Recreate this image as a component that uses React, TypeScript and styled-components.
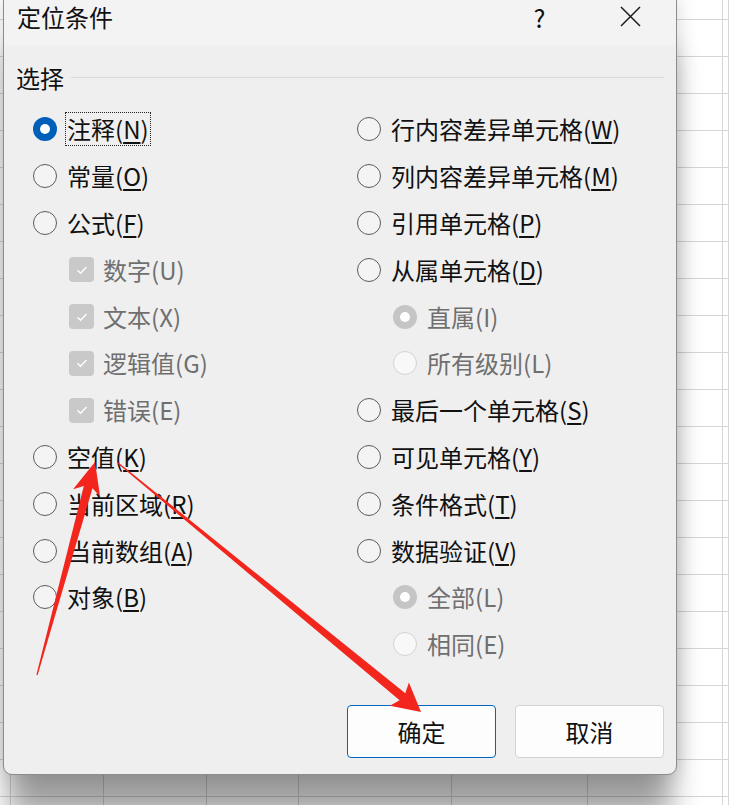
import styled, { createGlobalStyle, css } from 'styled-components';

type Option = {
  label: string;
  hotkey: string;
  kind?: 'radio' | 'check';
  checked?: boolean;
  disabled?: boolean;
  indent?: boolean;
  focused?: boolean;
};

const leftOptions: Option[] = [
  { label: '注释', hotkey: 'N', checked: true, focused: true },
  { label: '常量', hotkey: 'O' },
  { label: '公式', hotkey: 'F' },
  { label: '数字', hotkey: 'U', kind: 'check', checked: true, disabled: true, indent: true },
  { label: '文本', hotkey: 'X', kind: 'check', checked: true, disabled: true, indent: true },
  { label: '逻辑值', hotkey: 'G', kind: 'check', checked: true, disabled: true, indent: true },
  { label: '错误', hotkey: 'E', kind: 'check', checked: true, disabled: true, indent: true },
  { label: '空值', hotkey: 'K' },
  { label: '当前区域', hotkey: 'R' },
  { label: '当前数组', hotkey: 'A' },
  { label: '对象', hotkey: 'B' },
];

const rightOptions: Option[] = [
  { label: '行内容差异单元格', hotkey: 'W' },
  { label: '列内容差异单元格', hotkey: 'M' },
  { label: '引用单元格', hotkey: 'P' },
  { label: '从属单元格', hotkey: 'D' },
  { label: '直属', hotkey: 'I', checked: true, disabled: true, indent: true },
  { label: '所有级别', hotkey: 'L', disabled: true, indent: true },
  { label: '最后一个单元格', hotkey: 'S' },
  { label: '可见单元格', hotkey: 'Y' },
  { label: '条件格式', hotkey: 'T' },
  { label: '数据验证', hotkey: 'V' },
  { label: '全部', hotkey: 'L', checked: true, disabled: true, indent: true },
  { label: '相同', hotkey: 'E', disabled: true, indent: true },
];

const sheetColumns = [11, 93, 103, 92, 153, 136, 135];

const GlobalStyle = createGlobalStyle`
  body {
    margin: 0;
    background: #fff;
    font-family: "Noto Sans CJK SC", "Noto Sans", sans-serif;
  }
`;

const Page = styled.div`
  position: relative;
  width: 729px;
  height: 805px;
  overflow: hidden;
  background: #fff;
`;

const Sheet = styled.div`
  display: grid;
  grid-template-columns: ${sheetColumns.map((w) => `${w}px`).join(' ')} 1fr;
  grid-auto-rows: 37px;
  margin-top: -17px;
`;

const Cell = styled.div`
  border-right: 1px solid #d6d6d6;
  border-bottom: 1px solid #d6d6d6;
`;

const Dialog = styled.div`
  position: absolute;
  left: 3px;
  top: -1px;
  width: 674px;
  height: 776px;
  box-sizing: border-box;
  display: flex;
  flex-direction: column;
  background: #efefef;
  border: 1px solid #8c8c8c;
  border-radius: 0 0 9px 9px;
  box-shadow: 0 46px 30px -6px rgba(0, 0, 0, 0.38), 0 0 20px rgba(0, 0, 0, 0.17);
  color: #111;
`;

const TitleBar = styled.div`
  height: 45px;
  flex: none;
  display: flex;
  align-items: center;
  background: #f3f3f3;
`;

const Title = styled.div`
  flex: 1;
  padding-left: 13px;
  font-size: 24px;
  line-height: 30px;
  margin-top: -12px;
`;

const TitleButton = styled.div`
  width: 91px;
  height: 45px;
  display: flex;
  align-items: center;
  justify-content: center;
  font-size: 25px;
  margin-top: -12px;
`;

const Body = styled.div`
  flex: 1;
  display: flex;
  flex-direction: column;
  padding: 0 12px 16px 12px;
`;

const GroupHeader = styled.div`
  display: flex;
  align-items: center;
  height: 30px;
  margin-top: 17px;
  font-size: 24px;
`;

const GroupLine = styled.div`
  flex: 1;
  height: 1px;
  margin-left: 7px;
  background: #d9d9d9;
`;

const Options = styled.div`
  display: grid;
  grid-template-columns: 324px 1fr;
  padding-left: 17px;
  margin-top: 14px;
`;

const Column = styled.div`
  display: flex;
  flex-direction: column;
`;

const Row = styled.div<{ $indent?: boolean }>`
  height: 46.8px;
  flex: none;
  display: flex;
  align-items: center;
  padding-left: ${(p) => (p.$indent ? 36 : 0)}px;
`;

const Radio = styled.span<{ $checked?: boolean; $disabled?: boolean }>`
  position: relative;
  flex: none;
  width: 24px;
  height: 24px;
  box-sizing: border-box;
  border-radius: 50%;
  border: 1.5px solid #5c5c5c;
  background: #f4f4f4;
  ${(p) =>
    p.$disabled &&
    css`
      border: 1px solid #d2d2d2;
      background: #f8f8f8;
    `}
  ${(p) =>
    p.$checked &&
    css`
      border: none;
      background: ${p.$disabled ? '#c5c5c5' : '#005fb8'};
      &::after {
        content: '';
        position: absolute;
        left: 7px;
        top: 7px;
        width: 10px;
        height: 10px;
        border-radius: 50%;
        background: #fff;
      }
    `}
`;

const CheckBox = styled.span`
  flex: none;
  width: 25px;
  height: 25px;
  border-radius: 4px;
  background: #c9c9c9;
  display: flex;
  align-items: center;
  justify-content: center;
`;

const Label = styled.span<{ $disabled?: boolean; $focused?: boolean; $gap: number }>`
  margin-left: ${(p) => p.$gap}px;
  font-size: 24px;
  line-height: 32px;
  padding: 0 1px;
  color: ${(p) => (p.$disabled ? '#6f6f6f' : '#111')};
  outline: ${(p) => (p.$focused ? '1px dotted #222' : 'none')};
  white-space: nowrap;
`;

const HotKey = styled.span<{ $underline: boolean }>`
  text-decoration: ${(p) => (p.$underline ? 'underline' : 'none')};
  text-decoration-thickness: 1.5px;
  text-underline-offset: 3px;
`;

const Footer = styled.div`
  margin-top: auto;
  display: flex;
  justify-content: flex-end;
  gap: 19px;
`;

const Button = styled.button<{ $primary?: boolean }>`
  width: 149px;
  height: 53px;
  border-radius: 4px;
  background: #fdfdfd;
  border: 1px solid ${(p) => (p.$primary ? '#0067c0' : '#d3d3d3')};
  font-family: inherit;
  font-size: 24px;
  color: #111;
  padding: 0;
`;

const Overlay = styled.svg`
  position: absolute;
  left: 0;
  top: 0;
  pointer-events: none;
`;

const OptionRow = ({ opt }: { opt: Option }) => (
  <Row $indent={opt.indent}>
    {opt.kind === 'check' ? (
      <CheckBox>
        <svg width="14" height="14" viewBox="0 0 14 14">
          <path d="M2.5 7.2l3 3L11.5 4" fill="none" stroke="#fff" strokeWidth="1.4" />
        </svg>
      </CheckBox>
    ) : (
      <Radio $checked={opt.checked} $disabled={opt.disabled} />
    )}
    <Label $disabled={opt.disabled} $focused={opt.focused} $gap={opt.kind === 'check' ? 8 : 9}>
      {opt.label}(<HotKey $underline={!opt.disabled}>{opt.hotkey}</HotKey>)
    </Label>
  </Row>
);

const App = () => {
  return (
    <Page>
      <GlobalStyle />
      <Sheet>
        {Array.from({ length: 8 * 23 }).map((_, i) => (
          <Cell key={i} />
        ))}
      </Sheet>
      <Dialog>
        <TitleBar>
          <Title>定位条件</Title>
          <TitleButton>?</TitleButton>
          <TitleButton>
            <svg width="21" height="21" viewBox="0 0 21 21">
              <path d="M1 1L20 20M20 1L1 20" stroke="#1b1b1b" strokeWidth="1.5" />
            </svg>
          </TitleButton>
        </TitleBar>
        <Body>
          <GroupHeader>
            选择
            <GroupLine />
          </GroupHeader>
          <Options>
            <Column>
              {leftOptions.map((o) => (
                <OptionRow key={o.label} opt={o} />
              ))}
            </Column>
            <Column>
              {rightOptions.map((o) => (
                <OptionRow key={o.label} opt={o} />
              ))}
            </Column>
          </Options>
          <Footer>
            <Button $primary>确定</Button>
            <Button>取消</Button>
          </Footer>
        </Body>
      </Dialog>
      <Overlay width="729" height="805" viewBox="0 0 729 805">
        <polygon
          fill="#f2261c"
          points="95,462 100.1,496.5 92.5,488.3 37.6,675.2 36.4,674.8 83.8,485.9 73.1,489.2"
        />
        <polygon
          fill="#f2261c"
          points="421,712 389.9,705.8 399.6,700.2 117.6,463.5 118.4,462.5 405.3,693.3 408.9,682.6"
        />
      </Overlay>
    </Page>
  );
};

export default App;
